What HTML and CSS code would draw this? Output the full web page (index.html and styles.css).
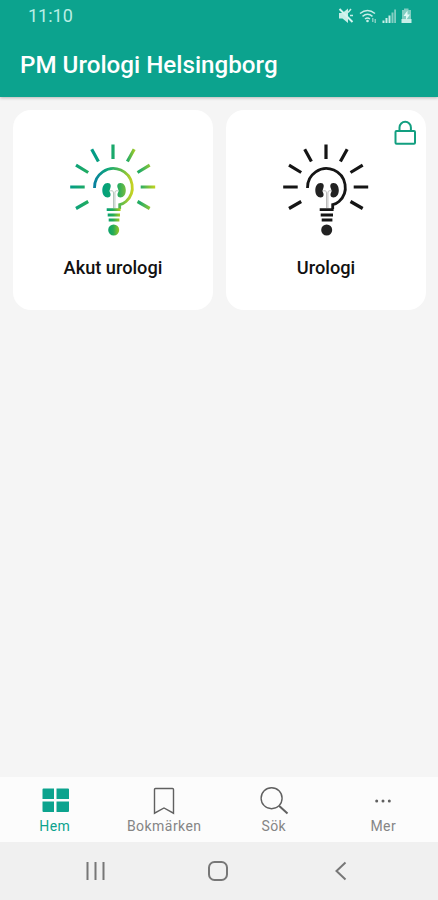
FILE: index.html
```html
<!DOCTYPE html>
<html lang="sv">
<head>
<meta charset="utf-8">
<meta name="viewport" content="width=device-width">
<title>PM Urologi Helsingborg</title>
<link rel="stylesheet" href="styles.css">
</head>
<body>
<div class="app">
  <header class="header">
    <div class="status">
      <span class="clock">11:10</span>
      <svg class="status-icons" width="76" height="18" viewBox="0 0 76 18">
        <path d="M1 6h3.500l5.500-4.500v14.500l-5.500-4.500H1z"/>
        <path class="mute" d="M1.500 2l13 13"/>
        <path class="line" d="M10 5.500l3-3.500M12 8.500h3"/>
        <path class="line" d="M22 6.500q7.500-6 15 0M24.500 9.300q5-4 10 0M27 12q2.500-2 5 0"/>
        <circle cx="29.500" cy="14" r="1.300"/>
        <path class="faint" d="M34 11h1.500v4H34zM36.500 12H38v4h-1.500z"/>
        <path d="M44.500 13.500h2v2.500h-2zM47.500 11h2v5h-2zM50.500 8.500h2v7.500h-2z"/>
        <path d="M53.500 5.500h2v10.500h-2zM56.200 2.500h1.800v13.500h-1.800z" class="faint"/>
        <path class="faint" d="M64 3h2V1.500h4.500V3h2.500v13H64z"/>
        <path d="M63.500 12h10v4h-10z"/>
        <path class="bolt" d="M69.500 3.500L65.500 9h2.500v4L72 7.500h-2.500z"/>
      </svg>
    </div>
    <h1 class="title">PM Urologi Helsingborg</h1>
  </header>

  <main class="content">
    <a class="card">
      <svg class="bulb" width="90" height="100" viewBox="8.300 5 90 100">
        <defs>
          <linearGradient id="rays-left" gradientUnits="userSpaceOnUse" x1="10" y1="0" x2="60" y2="0"><stop offset="0" stop-color="#009b88"/><stop offset=".35" stop-color="#22ad60"/><stop offset=".45" stop-color="#009b88"/><stop offset="1" stop-color="#22ad62"/></linearGradient>
          <linearGradient id="rays-right" gradientUnits="userSpaceOnUse" x1="67" y1="0" x2="96" y2="0"><stop offset="0" stop-color="#16a96d"/><stop offset=".27" stop-color="#a2ca25"/><stop offset=".42" stop-color="#16a96d"/><stop offset="1" stop-color="#c9d51a"/></linearGradient>
          <linearGradient id="arc" gradientUnits="userSpaceOnUse" x1="34" y1="0" x2="73" y2="0"><stop offset="0" stop-color="#087fa0"/><stop offset=".35" stop-color="#0ea77b"/><stop offset=".7" stop-color="#5cba4c"/><stop offset="1" stop-color="#c8d321"/></linearGradient>
          <linearGradient id="base" gradientUnits="userSpaceOnUse" x1="46" y1="0" x2="61" y2="0"><stop offset="0" stop-color="#009f78"/><stop offset=".5" stop-color="#25ab57"/><stop offset="1" stop-color="#b5cc19"/></linearGradient>
          <linearGradient id="organ" gradientUnits="userSpaceOnUse" x1="42" y1="0" x2="67" y2="0"><stop offset="0" stop-color="#00a080"/><stop offset=".6" stop-color="#16a866"/><stop offset="1" stop-color="#7fc03a"/></linearGradient>
        </defs>
        <path class="stroke rays" stroke="url(#rays-left)" d="M53.290 9.500L53.310 24M32 14.300L38.700 26.500M16.300 30.200L28.500 37.500M10.500 52H25M16.300 73.500L28.500 66.500"/>
        <path class="stroke rays" stroke="url(#rays-right)" d="M74.500 14.300L67.700 26.500M90 30.200L77.800 37.500M81 52H95.500M90 73.500L77.800 66.500"/>
        <path class="stroke arc" stroke="url(#arc)" d="M34.800 53A18.900 18.900 0 1 1 66.300 66.500Q63.500 69 60 69.700V74"/>
        <path class="shape" fill="url(#organ)" d="M48.200 48C44.500 47.800 42.600 51.500 42.600 55.300C42.600 59.500 44.800 62.500 48 62.500C51 62.500 51.500 59.500 50.300 57.500Q49.400 55.500 50.500 53.500C51.600 51 51.300 48.200 48.200 48ZM60.500 48C64.200 47.800 66.100 51.500 66.100 55.300C66.100 59.500 63.900 62.500 60.700 62.500C57.700 62.500 57.200 59.500 58.400 57.500Q59.300 55.500 58.200 53.500C57.100 51 57.400 48.200 60.500 48Z"/>
        <path class="duct" d="M50.500 55.800H52.500Q53.800 56 53.800 58V73M58.200 55.800H56.500Q55.200 56 55.200 58V73"/>
        <path class="stroke arc" stroke="url(#base)" d="M47 74.600H60.900M48 80H60.300M49 85H59.700"/>
        <circle class="shape" fill="url(#base)" cx="54" cy="95" r="5.500"/>
      </svg>
      <span class="label">Akut urologi</span>
    </a>
    <a class="card">
      <svg class="bulb mono" width="90" height="100" viewBox="8.300 5 90 100">
        <path class="stroke rays" d="M53.300 9.500V24M32 14.300L38.700 26.500M74.500 14.300L67.700 26.500M16.300 30.200L28.500 37.500M90 30.200L77.800 37.500M10.500 52H25M81 52H95.500M16.300 73.500L28.500 66.500M90 73.500L77.800 66.500"/>
        <path class="stroke arc" d="M34.800 53A18.900 18.900 0 1 1 66.300 66.500Q63.500 69 60 69.700V74"/>
        <path class="shape" d="M48.200 48C44.500 47.800 42.600 51.500 42.600 55.300C42.600 59.500 44.800 62.500 48 62.500C51 62.500 51.500 59.500 50.300 57.500Q49.400 55.500 50.500 53.500C51.600 51 51.300 48.200 48.200 48ZM60.500 48C64.200 47.800 66.100 51.500 66.100 55.300C66.100 59.500 63.900 62.500 60.700 62.500C57.700 62.500 57.200 59.500 58.400 57.500Q59.300 55.500 58.200 53.500C57.100 51 57.400 48.200 60.500 48Z"/>
        <path class="duct" d="M50.500 55.800H52.500Q53.800 56 53.800 58V73M58.200 55.800H56.500Q55.200 56 55.200 58V73"/>
        <path class="stroke arc" d="M47 74.600H60.900M48 80H60.300M49 85H59.700"/>
        <circle class="shape" cx="54" cy="95" r="5.500"/>
      </svg>
      <span class="label">Urologi</span>
      <svg class="lock" width="24" height="26" viewBox="0 0 24 26">
        <rect x="2.500" y="11" width="19.500" height="12.800" rx="1"/>
        <path d="M6.500 11V7.500a5.700 5.700 0 0 1 11.400 0V11"/>
      </svg>
    </a>
  </main>

  <nav class="tabs">
    <a class="tab active">
      <svg width="30" height="30" viewBox="0 0 30 30"><path class="tiles" d="M2.500 4.500a1 1 0 0 1 1-1H14v10.500H2.500zM16.500 3.500H28a1 1 0 0 1 1 1v9.500H16.500zM2.500 16.500H14v10.500H3.500a1 1 0 0 1-1-1zM16.500 16.500H29v9.500a1 1 0 0 1-1 1H16.500z"/></svg>
      <span>Hem</span>
    </a>
    <a class="tab">
      <svg width="30" height="30" viewBox="0 0 30 30"><path d="M5.500 4.500Q5.500 3.500 6.500 3.500H23.500Q24.500 3.500 24.500 4.500V28.200L15 23L5.500 28.200Z"/></svg>
      <span>Bokmärken</span>
    </a>
    <a class="tab">
      <svg width="30" height="30" viewBox="0 0 30 30"><circle cx="12.600" cy="13.200" r="10.500"/><path class="handle" d="M20 20.700L28.500 28.500"/></svg>
      <span>Sök</span>
    </a>
    <a class="tab">
      <svg width="30" height="30" viewBox="0 0 30 30"><g class="dots"><circle cx="8.700" cy="16" r="1.500"/><circle cx="15" cy="16" r="1.500"/><circle cx="21.300" cy="16" r="1.500"/></g></svg>
      <span>Mer</span>
    </a>
  </nav>

  <div class="system">
    <svg width="24" height="24" viewBox="0 0 24 24"><path d="M4.500 3v18M12.500 3v18M20.500 3v18"/></svg>
    <svg width="24" height="24" viewBox="0 0 24 24"><rect x="3" y="3" width="18" height="18" rx="5.500"/></svg>
    <svg width="24" height="24" viewBox="0 0 24 24"><path d="M16.500 3.500L7.500 12l9 8.500"/></svg>
  </div>
</div>
</body>
</html>
```
FILE: styles.css
```css
* { box-sizing: border-box; }

body {
  margin: 0;
  font-family: Roboto, "Liberation Sans", sans-serif;
  background: #f5f5f5;
}

.app {
  display: flex;
  flex-direction: column;
  width: 438px;
  height: 900px;
  overflow: hidden;
}

.header {
  height: 97px;
  background: #0ca38e;
  color: #fff;
  box-shadow: 0 1px 3px rgba(0, 0, 0, .25);
}

.status {
  display: flex;
  justify-content: space-between;
  align-items: center;
  height: 32px;
  padding: 0 24px 0 28px;
}

.clock {
  font-size: 18px;
  line-height: 32px;
  color: #b8eee5;
}

.status-icons { fill: #c8eee8; }
.status-icons .mute { stroke: #d5f5f0; stroke-width: 2; }
.status-icons .line { fill: none; stroke: #c8eee8; stroke-width: 1.5; }
.status-icons .faint { fill: #82cec2; }
.status-icons .bolt { fill: #e1faf6; }

.title {
  margin: 0;
  padding-left: 20px;
  font-size: 24.2px;
  line-height: 66px;
  font-weight: 500;
  white-space: nowrap;
}

.content {
  flex: 1;
  display: grid;
  grid-template-columns: 200px 200px;
  align-content: start;
  gap: 13px;
  padding: 13px 12px 0 13px;
}

.card {
  position: relative;
  display: flex;
  flex-direction: column;
  align-items: center;
  height: 200px;
  padding-top: 30px;
  border-radius: 18px;
  background: #fff;
}

.bulb { display: block; }
.stroke { fill: none; }
.rays { stroke-width: 3.2; }
.arc { stroke-width: 2.8; }
.duct { fill: none; stroke: #b5c5bd; stroke-width: 1; }
.mono .stroke { stroke: #151515; }
.mono .shape { fill: #222; }
.mono .duct { stroke: #bbb; }

.label {
  margin-top: 16px;
  font-size: 18.2px;
  line-height: 24px;
  font-weight: 500;
  color: #111;
}

.lock {
  position: absolute;
  top: 10px;
  right: 9px;
  fill: none;
  stroke: #129f80;
  stroke-width: 2;
}

.tabs {
  display: grid;
  grid-template-columns: repeat(4, 1fr);
  height: 65px;
  background: #fcfcfc;
}

.tab {
  display: flex;
  flex-direction: column;
  align-items: center;
  gap: 1px;
  padding-top: 8px;
  font-size: 14px;
  line-height: 20px;
  letter-spacing: .45px;
  color: #858585;
}

.tab svg { fill: none; stroke: #606060; stroke-width: 1.4; }
.tab .tiles { fill: #0ca38e; stroke: none; }
.tab .handle { stroke-width: 2; }
.tab .dots { fill: #606060; stroke: none; }
.tab.active { color: #0ca38e; }

.system {
  display: flex;
  justify-content: space-between;
  align-items: center;
  height: 58px;
  padding: 0 85px 0 83px;
  background: #f0f0f0;
}

.system svg { fill: none; stroke: #777; stroke-width: 2; }
```
